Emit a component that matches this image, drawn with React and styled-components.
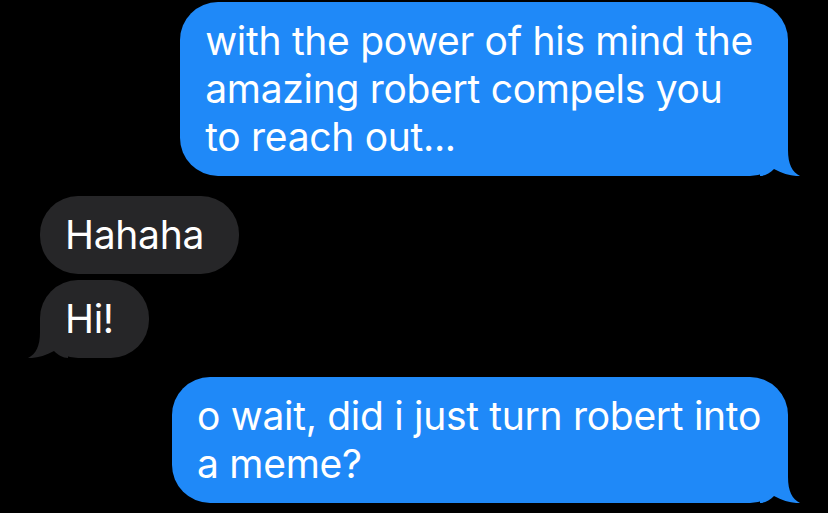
import React from 'react'
import styled, { createGlobalStyle } from 'styled-components'

const GlobalStyle = createGlobalStyle`
  html, body {
    margin: 0;
    padding: 0;
    background: #000;
  }
  body {
    font-family: Inter, "Liberation Sans", sans-serif;
    -webkit-font-smoothing: antialiased;
  }
`

const Thread = styled.div`
  display: flex;
  flex-direction: column;
  padding: 2px 40px 0 40px;
  width: 828px;
  height: 513px;
  box-sizing: border-box;
  overflow: hidden;
`

const Group = styled.div`
  display: flex;
  flex-direction: column;
  align-items: ${p => (p.$sent ? 'flex-end' : 'flex-start')};
  gap: 6px;
  margin-bottom: ${p => p.$space}px;
`

const Bubble = styled.div`
  position: relative;
  background: ${p => (p.$sent ? '#1f89f8' : '#262628')};
  color: #fff;
  font-size: 39px;
  line-height: 48px;
  letter-spacing: -0.3px;
  white-space: nowrap;
  padding: 15px ${p => p.$padRight}px 15px 25px;
  border-radius: 38px;
`

const Tail = styled.svg`
  position: absolute;
  bottom: 0;
  width: 40px;
  height: 40px;
  ${p => (p.$sent ? 'right: -12px;' : 'left: -12px; transform: scaleX(-1);')}
`

const BubbleTail = ({ sent }) => (
  <Tail $sent={sent} viewBox="0 0 40 40">
    <path
      d="M0 0 H28 V14 C28 28 32 36 40 40 C33 40.5 23 38 14 33 C10 37 5 40 0 40 Z"
      fill={sent ? '#1f89f8' : '#262628'}
    />
  </Tail>
)

const Message = ({ sent, tail, lines, padRight = 35 }) => (
  <Bubble $sent={sent} $padRight={padRight}>
    {lines.map((l, i) => (
      <React.Fragment key={i}>
        {i > 0 && <br />}
        {l}
      </React.Fragment>
    ))}
    {tail && <BubbleTail sent={sent} />}
  </Bubble>
)

const App = () => (
  <>
    <GlobalStyle />
    <Thread>
      <Group $sent $space={20}>
        <Message
          sent
          tail
          padRight={35}
          lines={['with the power of his mind the', 'amazing robert compels you', 'to reach out...']}
        />
      </Group>
      <Group $space={19}>
        <Message padRight={35} lines={['Hahaha']} />
        <Message tail padRight={35} lines={['Hi!']} />
      </Group>
      <Group $sent $space={0}>
        <Message sent tail padRight={27} lines={['o wait, did i just turn robert into', 'a meme?']} />
      </Group>
    </Thread>
  </>
)

export default App
